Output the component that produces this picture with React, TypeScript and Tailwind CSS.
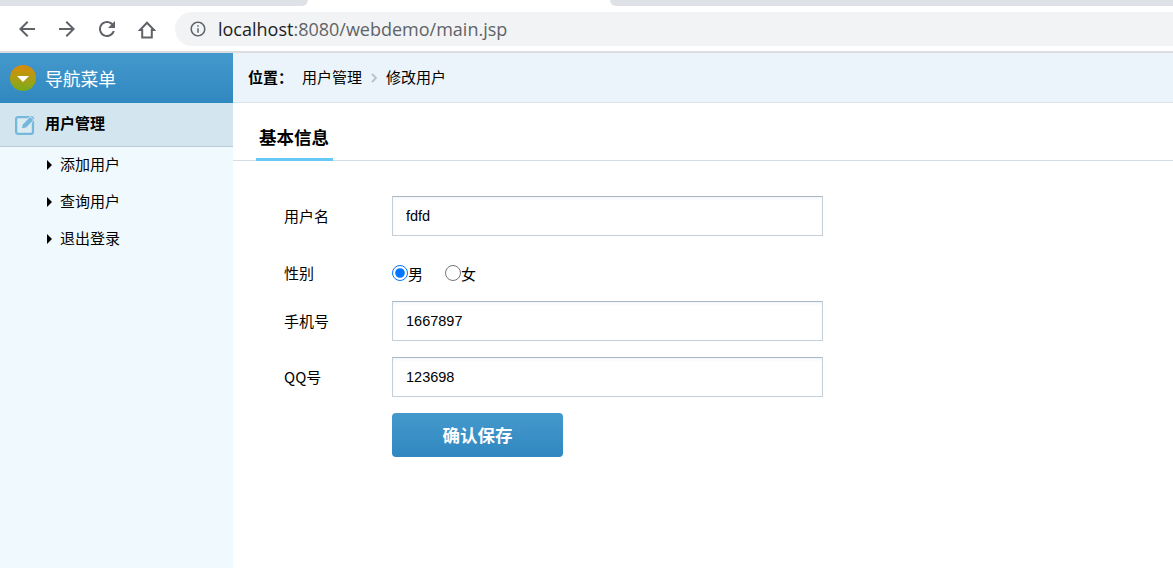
const cjk = 'font-["Noto_Sans_CJK_SC","Liberation_Sans",sans-serif]'

function ChromeIcon({ d, className }: { d: string; className: string }) {
  return (
    <svg viewBox="0 0 24 24" className={className} fill="currentColor">
      <path d={d} />
    </svg>
  )
}

function BrowserBar() {
  return (
    <div className="bg-white">
      <div className="flex h-[6px]">
        <div className="w-[308px] bg-[#dee1e6] rounded-br-[8px]" />
        <div className="w-[302px] bg-white" />
        <div className="flex-1 bg-[#dee1e6] rounded-bl-[8px]" />
      </div>
      <div className="flex h-[45px] items-start text-[#5f6368]">
        <div className="flex items-center h-[34px] mt-[6px] pl-[15px] gap-[16px] w-[175px]">
          <ChromeIcon className="w-[24px] h-[24px]" d="M20 11H7.83l5.59-5.59L12 4l-8 8 8 8 1.41-1.41L7.83 13H20v-2z" />
          <ChromeIcon className="w-[24px] h-[24px]" d="M12 4l-1.41 1.41L16.17 11H4v2h12.17l-5.58 5.59L12 20l8-8z" />
          <ChromeIcon className="w-[24px] h-[24px]" d="M17.65 6.35C16.2 4.9 14.21 4 12 4c-4.42 0-7.99 3.58-7.99 8s3.57 8 7.99 8c3.73 0 6.84-2.55 7.73-6h-2.08c-.82 2.33-3.04 4-5.65 4-3.31 0-6-2.69-6-6s2.69-6 6-6c1.66 0 3.14.69 4.22 1.78L13 11h7V4l-2.35 2.35z" />
          <svg viewBox="0 0 24 24" className="w-[24px] h-[24px] mt-[1px]" fill="none" stroke="currentColor" strokeWidth="2">
            <path d="M12 4.8L5 12h2.2v7.6h9.6V12H19z" />
          </svg>
        </div>
        <div className="flex-1 flex items-center h-[34px] mt-[6px] bg-[#f1f3f4] rounded-l-[17px] pl-[14px]">
          <ChromeIcon className="w-[18px] h-[18px]" d="M11 7h2v2h-2zm0 4h2v6h-2zm1-9C6.48 2 2 6.48 2 12s4.48 10 10 10 10-4.48 10-10S17.52 2 12 2zm0 18c-4.41 0-8-3.59-8-8s3.59-8 8-8 8 3.59 8 8-3.59 8-8 8z" />
          <span className="ml-[11px] text-[18px] font-['Open_Sans',sans-serif]">
            <span className="text-[#202124]">localhost</span>:8080/webdemo/main.jsp
          </span>
        </div>
      </div>
      <div className="h-[2px] bg-[#dcdde0]" />
    </div>
  )
}

function Sidebar() {
  return (
    <aside className="w-[233px] shrink-0 bg-[#f0f9fe]">
      <div className="h-[50px] flex items-center pl-[10px] bg-gradient-to-b from-[#4499cc] to-[#3088c0]">
        <div className="w-[26px] h-[26px] rounded-full bg-gradient-to-b from-[#d98a06] to-[#74ab1c] flex items-center justify-center">
          <div className="w-0 h-0 mt-[2px] border-x-[6px] border-x-transparent border-t-[6px] border-t-white" />
        </div>
        <span className="ml-[9px] text-[17.8px] text-white">导航菜单</span>
      </div>
      <div className="h-[44px] flex items-center pl-[15px] pb-[2px] bg-[#d3e5ef] border-b border-[#b9cdd9]">
        <svg viewBox="0 0 22 22" className="w-[21px] h-[21px] mt-[2px]">
          <rect x="1.2" y="3.2" width="17.6" height="17.6" rx="2" fill="#dceaf2" stroke="#74b8dc" strokeWidth="2.4" />
          <path d="M6.5 15.5l1.2-4.5 8-8.5 4.2 3.8-8.2 8.4z" fill="#74b8dc" stroke="#dceaf2" strokeWidth="1" />
        </svg>
        <span className="ml-[9px] text-[15px] font-bold text-black">用户管理</span>
      </div>
      <ul className="text-[15px] text-black">
        {['添加用户', '查询用户', '退出登录'].map((item) => (
          <li key={item} className="h-[37px] flex items-center pl-[47px] pb-[3px]">
            <div className="w-0 h-0 mt-[1px] border-y-[5px] border-y-transparent border-l-[5px] border-l-black" />
            <span className="ml-[8px]">{item}</span>
          </li>
        ))}
      </ul>
    </aside>
  )
}

function Field({ label, value }: { label: string; value: string }) {
  return (
    <div className="flex items-center">
      <label className="w-[108px] text-[15px] text-black">{label}</label>
      <input
        readOnly
        value={value}
        className="w-[431px] h-[40px] px-[13px] text-[14.5px] text-black font-['Liberation_Sans',sans-serif] border border-[#c3d0da] border-t-[#a9b8c4] shadow-[inset_0_2px_3px_rgba(120,140,160,0.08)] outline-none"
      />
    </div>
  )
}

export default function App() {
  return (
    <div className={`h-[568px] w-[1173px] overflow-hidden flex flex-col bg-white ${cjk}`}>
      <BrowserBar />
      <div className="flex flex-1">
        <Sidebar />
        <main className="flex-1">
          <div className="h-[50px] flex items-center pl-[15px] bg-[#ebf4fb] border-b border-[#d8e3ea] text-[15px] text-black">
            <span className="font-bold w-[54px]">位置：</span>
            <span>用户管理</span>
            <svg viewBox="0 0 8 10" className="w-[8px] h-[10px] mx-[8px]">
              <path d="M2 1l4 4-4 4" fill="none" stroke="#b5c2cc" strokeWidth="1.8" />
            </svg>
            <span>修改用户</span>
          </div>
          <div className="h-[58px] flex items-end border-b border-[#d3dfe8] pl-[23px]">
            <div className="w-[77px] h-[35px] -mb-px border-b-[3px] border-[#66c8f5] pl-[3px] text-[17.5px] font-bold text-black leading-[22px]">
              基本信息
            </div>
          </div>
          <form className="pt-[35px] pl-[51px] flex flex-col gap-[16px]">
            <Field label="用户名" value="fdfd" />
            <div className="flex items-center h-[33px] pt-[9px] text-[15px] text-black">
              <span className="w-[108px]">性别</span>
              <label className="flex items-center w-[53px]">
                <input type="radio" name="sex" defaultChecked className="w-[16px] h-[16px] m-0" />
                <span className="pt-[2px]">男</span>
              </label>
              <label className="flex items-center">
                <input type="radio" name="sex" className="w-[16px] h-[16px] m-0" />
                <span className="pt-[2px]">女</span>
              </label>
            </div>
            <Field label="手机号" value="1667897" />
            <Field label="QQ号" value="123698" />
            <div className="pl-[108px]">
              <button
                type="button"
                className="w-[171px] h-[44px] rounded-[4px] bg-gradient-to-b from-[#4499cc] to-[#3088c0] text-white text-[17.5px] font-bold"
              >
                确认保存
              </button>
            </div>
          </form>
        </main>
      </div>
    </div>
  )
}
